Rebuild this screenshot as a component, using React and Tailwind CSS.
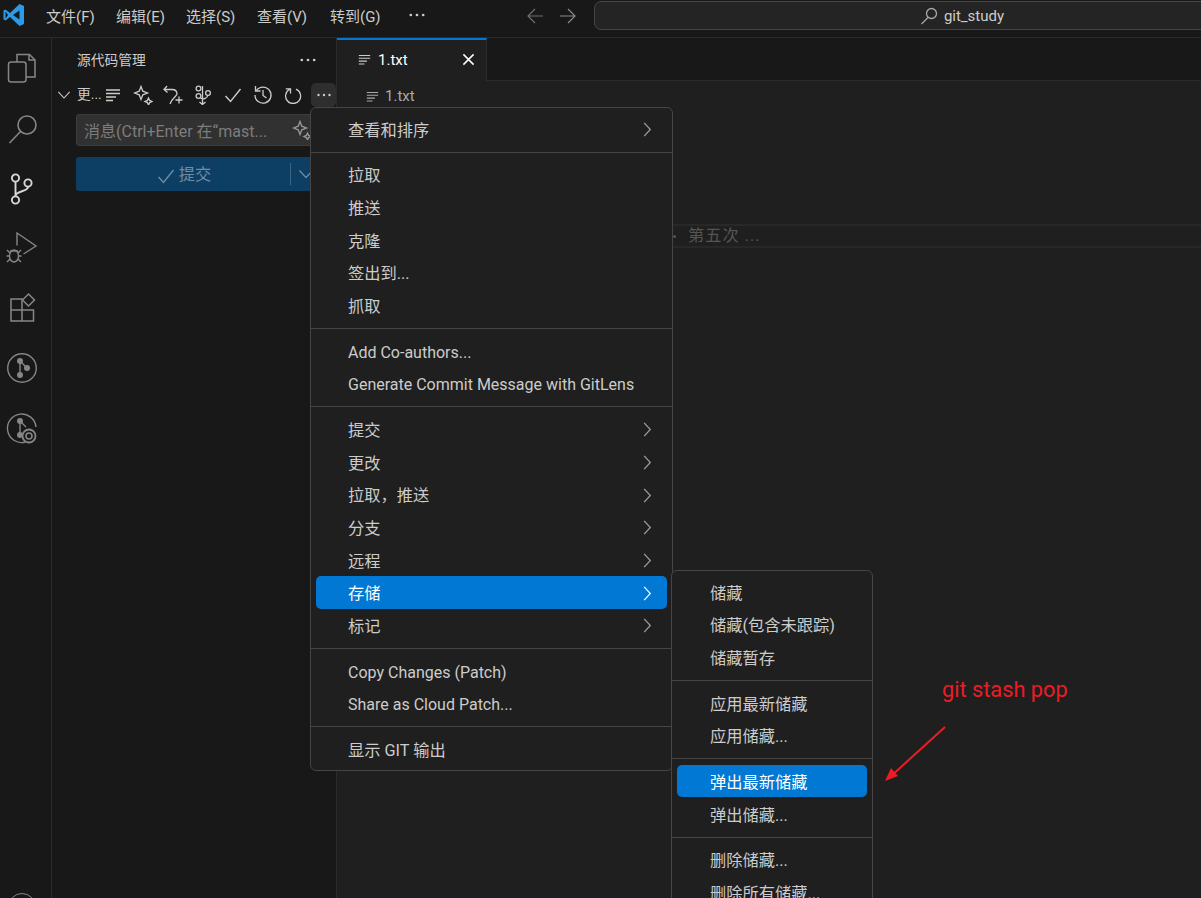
const F = { fontFamily: 'Roboto, "Noto Sans CJK SC", sans-serif' };

function Lines({ className = "" }) {
  return (
    <svg viewBox="0 0 16 16" className={className} fill="none" stroke="currentColor" strokeWidth="1.3">
      <path d="M1 3h14M1 6.5h14M1 10h10M1 13.500h7" />
    </svg>
  );
}
function Sparkle({ className = "" }) {
  return (
    <svg viewBox="0 0 20 20" className={className} fill="none" stroke="currentColor" strokeWidth="1.3">
      <path d="M8 1.500 L9.800 6.200 L14.500 8 L9.800 9.800 L8 14.500 L6.200 9.800 L1.500 8 L6.200 6.200 Z" />
      <path d="M15.500 13 L16.600 15.400 L19 16.500 L16.600 17.600 L15.500 20 L14.400 17.600 L12 16.500 L14.400 15.400 Z" />
    </svg>
  );
}
function Chevron({ className = "" }) {
  return (
    <svg viewBox="0 0 12 18" className={className} fill="none" stroke="currentColor" strokeWidth="1.3">
      <path d="M3 2l6.500 7L3 16" />
    </svg>
  );
}
function Down({ className = "" }) {
  return (
    <svg viewBox="0 0 16 16" className={`shrink-0 ${className}`} fill="none" stroke="currentColor" strokeWidth="1.2">
      <path d="M1.500 4.500l6.500 7 6.500-7" />
    </svg>
  );
}
function Dots({ className = "" }) {
  return (
    <svg viewBox="0 0 16 16" className={className} fill="currentColor">
      <circle cx="2.500" cy="8" r="1.200" />
      <circle cx="8" cy="8" r="1.200" />
      <circle cx="13.500" cy="8" r="1.200" />
    </svg>
  );
}
function Check({ className = "" }) {
  return (
    <svg viewBox="0 0 18 18" className={className} fill="none" stroke="currentColor" strokeWidth="1.4">
      <path d="M1.500 10l5 5.500L16.500 3" />
    </svg>
  );
}

const AI = "w-[36px] h-[36px] text-[#868686]";
const acts = [
  <svg key="f" viewBox="0 0 36 36" className={AI} fill="none" stroke="currentColor" strokeWidth="1.500">
    <path d="M13 12V4.500h12.500L31 10v17H22" />
    <path d="M25 4.500V10h6" />
    <rect x="4.500" y="12" width="17.500" height="20" rx="2.500" />
  </svg>,
  <svg key="s" viewBox="0 0 36 36" className={AI} fill="none" stroke="currentColor" strokeWidth="1.600">
    <circle cx="23" cy="15" r="9" />
    <path d="M16.500 21.500L5.500 33" />
  </svg>,
  <svg key="g" viewBox="0 0 36 36" className={`${AI} !text-[#d7d7d7]`} fill="none" stroke="currentColor" strokeWidth="1.900">
    <circle cx="11.500" cy="8" r="3.600" />
    <circle cx="24" cy="13" r="3.600" />
    <circle cx="11.500" cy="30" r="3.600" />
    <path d="M11.500 12v14M24 17c0 5-12.500 3.500-12.500 9" />
  </svg>,
  <svg key="d" viewBox="0 0 36 36" className={AI} fill="none" stroke="currentColor" strokeWidth="1.400">
    <path d="M13 15.500V3l19 13-12.500 8" />
    <ellipse cx="10" cy="26" rx="4.500" ry="6" />
    <path d="M6 21h8M3 20l3 3M17 20l-3 3M2.500 26h3M14.500 26h3M3 32l3-3M17 32l-3-3" />
  </svg>,
  <svg key="e" viewBox="0 0 36 36" className={AI} fill="none" stroke="currentColor" strokeWidth="1.500">
    <path d="M7 9h11v22H7zM7 20h22.500v11H18" />
    <path d="M24.500 4l6 6-6 6-6-6z" />
  </svg>,
  <svg key="l" viewBox="0 0 36 36" className={AI} fill="none" stroke="currentColor" strokeWidth="1.400">
    <circle cx="18" cy="18" r="14.300" />
    <path d="M16 11v14M16 11l7 7" />
    <circle cx="16" cy="11" r="2.300" fill="currentColor" />
    <circle cx="16" cy="25" r="2.300" fill="currentColor" />
    <circle cx="23" cy="18" r="2.300" fill="currentColor" />
  </svg>,
  <svg key="m" viewBox="0 0 36 36" className={AI} fill="none" stroke="currentColor" strokeWidth="1.400">
    <path d="M21 32.200A14.300 14.300 0 1 1 32 17" />
    <path d="M16 11v14M16 11l6 6" />
    <circle cx="16" cy="11" r="2.300" fill="currentColor" />
    <circle cx="16" cy="25" r="2.300" fill="currentColor" />
    <circle cx="25" cy="26" r="6.500" fill="#181818" strokeWidth="1.800" />
    <circle cx="25" cy="26" r="3" strokeWidth="1.600" />
  </svg>,
];

const TI = "w-[18px] h-[18px]";
const tools = [
  <Lines key="a" className="w-[16px] h-[16px]" />,
  <Sparkle key="b" className="w-[20px] h-[20px]" />,
  <svg key="c" viewBox="0 0 20 20" className="w-[20px] h-[20px]" fill="none" stroke="currentColor" strokeWidth="1.300">
    <path d="M4 1L1 4.500 4.500 7.500M1.500 4.500H9c4 0 5 2.500 5 4.500S9 13 7 19" />
    <path d="M16 11.500v7M12.500 15h7" />
  </svg>,
  <svg key="d" viewBox="0 0 18 20" className="w-[18px] h-[20px]" fill="none" stroke="currentColor" strokeWidth="1.300">
    <circle cx="4.500" cy="3.500" r="2.400" />
    <circle cx="4.500" cy="11" r="2.400" />
    <circle cx="14" cy="8" r="2.400" />
    <path d="M8.500 1v18M5.500 17l3 2.500 3-2.500M6.500 13c3 2 7 0 7.500-3" />
  </svg>,
  <Check key="e" className={TI} />,
  <svg key="f" viewBox="0 0 20 20" className="w-[20px] h-[20px]" fill="none" stroke="currentColor" strokeWidth="1.300">
    <path d="M3.500 5.500A8 8 0 1 1 2 10" />
    <path d="M2.500 1v5h5M10 5v5.500l3.500 2.500" />
  </svg>,
  <svg key="g" viewBox="0 0 18 18" className={TI} fill="none" stroke="currentColor" strokeWidth="1.300">
    <path d="M6 3.200a7.500 7.500 0 1 0 6-.1" />
    <path d="M6.500 7.500V2.800H1.800" />
  </svg>,
];

function Row({ label, arrow, active, sub }) {
  const latin = /^[A-Z]/.test(label);
  return (
    <div className={`relative flex items-center h-[32.670px] mx-[5px] ${active ? "text-white" : "text-[#cccccc]"}`}>
      {active ? <span className="absolute inset-x-0 -top-[1.500px] bottom-[1.500px] rounded-[5px] bg-[#0078d4]" /> : null}
      <span className={`relative ${sub ? "pl-[33px]" : "pl-[32px]"} pt-[1px] whitespace-nowrap ${latin ? "text-[16px]" : ""}`}>{label}</span>
      {arrow ? (
        <Chevron className={`absolute right-[14px] top-[7px] w-[12px] h-[17px] ${active ? "text-white" : "text-[#a0a0a0]"}`} />
      ) : null}
    </div>
  );
}
function Sep() {
  return <div className="h-[1px] bg-[#454545] mt-[5px] mb-[7px]" />;
}

const main = [
  [["查看和排序", 1]],
  [["拉取"], ["推送"], ["克隆"], ["签出到..."], ["抓取"]],
  [["Add Co-authors..."], ["Generate Commit Message with GitLens"]],
  [["提交", 1], ["更改", 1], ["拉取，推送", 1], ["分支", 1], ["远程", 1], ["存储", 1, 1], ["标记", 1]],
  [["Copy Changes (Patch)"], ["Share as Cloud Patch..."]],
  [["显示 GIT 输出"]],
];
const subm = [
  [["储藏"], ["储藏(包含未跟踪)"], ["储藏暂存"]],
  [["应用最新储藏"], ["应用储藏..."]],
  [["弹出最新储藏", 0, 1], ["弹出储藏..."]],
  [["删除储藏..."], ["删除所有储藏..."]],
];

function Menu({ groups, sub, className }) {
  return (
    <div className={`absolute rounded-[6px] border border-[#454545] bg-[#1f1f1f] pt-[6px] text-[16.250px] ${className}`}>
      {groups.map((g, i) => (
        <div key={i}>
          {i > 0 && <Sep />}
          {g.map(([l, a, act]) => (
            <Row key={l} label={l} arrow={a} active={act} sub={sub} />
          ))}
        </div>
      ))}
    </div>
  );
}

export default function App() {
  return (
    <div style={F} className="relative w-[1201px] h-[898px] overflow-hidden bg-[#1f1f1f] flex flex-col text-[#cccccc]">
      {/* title bar */}
      <div className="h-[38px] shrink-0 flex items-start bg-[#181818] border-b border-[#2b2b2b] overflow-hidden">
        <svg viewBox="0 0 24 24" className="w-[24px] h-[24px] ml-[2px] mt-[3px] shrink-0">
          <path d="M17.500 1L8 10 3.500 6.500 1.500 7.500v9l2 1L8 14l9.500 9 4.500-2V3z" fill="#2a9be8" />
          <path d="M17.500 7.500L11 12l6.500 4.500z" fill="#181818" />
          <path d="M3.500 8.500L6 12l-2.500 3.500z" fill="#181818" />
        </svg>
        <div className="flex ml-[20px] h-[34px] items-center text-[15px] text-[#cccccc] gap-[20px] shrink-0">
          <span className="w-[50px] whitespace-nowrap">文件(F)</span>
          <span className="w-[50px] whitespace-nowrap">编辑(E)</span>
          <span className="w-[51px] whitespace-nowrap">选择(S)</span>
          <span className="w-[53px] whitespace-nowrap">查看(V)</span>
          <span className="w-[53px] whitespace-nowrap">转到(G)</span>
        </div>
        <Dots className="w-[18px] h-[18px] ml-[25px] mt-[6px] shrink-0" />
        <svg viewBox="0 0 18 18" className="w-[18px] h-[18px] ml-[100px] mt-[7px] text-[#6e6e6e] shrink-0" fill="none" stroke="currentColor" strokeWidth="1.200">
          <path d="M9 2L2 9l7 7M2 9h15" />
        </svg>
        <svg viewBox="0 0 18 18" className="w-[18px] h-[18px] ml-[15px] mt-[7px] text-[#8a8a8a] shrink-0" fill="none" stroke="currentColor" strokeWidth="1.200">
          <path d="M9 2l7 7-7 7M16 9H1" />
        </svg>
        <div className="ml-[17px] mt-[1px] w-[732px] h-[29px] shrink-0 rounded-[7px] border border-[#454545] bg-[#242424] flex items-center justify-center gap-[6px] pl-[4px] pt-[1px] text-[15px] text-[#cccccc]">
          <svg viewBox="0 0 18 18" className="w-[18px] h-[18px] text-[#a8a8a8]" fill="none" stroke="currentColor" strokeWidth="1.300">
            <circle cx="11.500" cy="6.500" r="5" />
            <path d="M8 10.500L1.500 17" />
          </svg>
          <span>git_study</span>
        </div>
      </div>

      <div className="flex flex-1 min-h-0">
        {/* activity bar */}
        <div className="w-[52px] shrink-0 bg-[#181818] border-r border-[#2b2b2b] flex flex-col relative">
          {acts.map((a, i) => (
            <div key={i} className="h-[60px] flex items-center pl-[4px]">
              {a}
            </div>
          ))}
          <div className="absolute left-[8px] top-[855px] w-[28px] h-[28px] rounded-full border-[1.500px] border-[#868686]" />
        </div>

        {/* sidebar */}
        <div className="w-[285px] shrink-0 bg-[#181818] border-r border-[#2b2b2b] flex flex-col">
          <div className="h-[44px] flex items-center pl-[25px] pr-[19px] justify-between text-[13.750px]">
            <span>源代码管理</span>
            <Dots className="w-[18px] h-[18px]" />
          </div>
          <div className="h-[25px] flex items-center pl-[5px] text-[13.750px] relative">
            <Down className="w-[14px] h-[14px] mr-[6px]" />
            <span className="w-[21px] whitespace-nowrap">更...</span>
            <div className="flex items-center shrink-0">
              {tools.map((t, i) => (
                <div key={i} className="w-[30px] flex items-center justify-center">
                  {t}
                </div>
              ))}
              <div className="w-[25px] h-[24px] ml-[3px] rounded-[5px] bg-[#2e2e2e] flex items-center justify-center">
                <Dots className="w-[16px] h-[16px]" />
              </div>
            </div>
          </div>
          <div className="ml-[24px] mt-[7px] mr-[14px] h-[32px] rounded-[3px] border border-[#3c3c3c] bg-[#313131] flex items-center pl-[7px] pt-[3px] text-[16px] text-[#7d7d7d] whitespace-nowrap relative">
            消息(Ctrl+Enter 在“mast...
            <Sparkle className="absolute left-[215px] top-[5px] w-[20px] h-[20px] text-[#9a9a9a]" />
          </div>
          <div className="ml-[24px] mt-[11px] mr-[14px] h-[34px] rounded-[3px] bg-[#0d3e63] flex items-center text-[#6f8ca3] text-[16.250px]">
            <div className="flex-1 flex items-center justify-center gap-[4px] pl-[2px] pt-[3px]">
              <Check className="w-[18px] h-[18px]" />
              <span>提交</span>
            </div>
            <div className="w-[1px] h-[22px] bg-[#3a6585] mr-[7px]" />
            <Down className="w-[16px] h-[16px] mr-[8px]" />
          </div>
        </div>

        {/* editor */}
        <div className="flex-1 min-w-0 flex flex-col bg-[#1f1f1f]">
          <div className="h-[43px] shrink-0 flex bg-[#181818] border-b border-[#2b2b2b]">
            <div className="w-[150px] h-[43px] border-t-2 border-t-[#0078d4] border-r border-r-[#2b2b2b] bg-[#1f1f1f] flex items-center pl-[21px] text-white text-[15px] relative">
              <Lines className="w-[13px] h-[13px] mr-[7px] text-[#cccccc] -mt-[2px]" />
              <span>1.txt</span>
              <svg viewBox="0 0 14 14" className="absolute right-[11px] top-[13px] w-[13px] h-[13px]" fill="none" stroke="currentColor" strokeWidth="1.600">
                <path d="M1.500 1.500l11 11M12.500 1.500l-11 11" />
              </svg>
            </div>
          </div>
          <div className="h-[31px] shrink-0 flex items-center pl-[29px] text-[15px] text-[#a9a9a9]">
            <Lines className="w-[13px] h-[13px] mr-[6px]" />
            <span>1.txt</span>
          </div>
          <div className="mt-[112px] h-[24px] shrink-0 border-y-2 border-[#282828] flex items-center text-[#555555] text-[16.250px] tracking-[1px] pl-[336px] gap-[12px]">
            <span className="w-[3px] h-[3px] rounded-full bg-[#555555]" />
            <span>第五次 ...</span>
          </div>
        </div>
      </div>

      <Menu groups={main} className="left-[310px] top-[107px] w-[363px] h-[664px]" />
      <Menu groups={subm} sub className="left-[671px] top-[570px] w-[202px] h-[360px]" />

      {/* annotation */}
      <span className="absolute left-[942px] top-[675px] text-[21.750px] text-[#ed1c24] whitespace-nowrap leading-[30px]">git stash pop</span>
      <svg viewBox="0 0 70 65" className="absolute left-[882px] top-[722px] w-[70px] h-[65px]" fill="none">
        <path d="M63 5L8 55" stroke="#ed1c24" strokeWidth="2" />
        <path d="M3 59L9 46 16 54z" fill="#ed1c24" />
      </svg>
    </div>
  );
}
